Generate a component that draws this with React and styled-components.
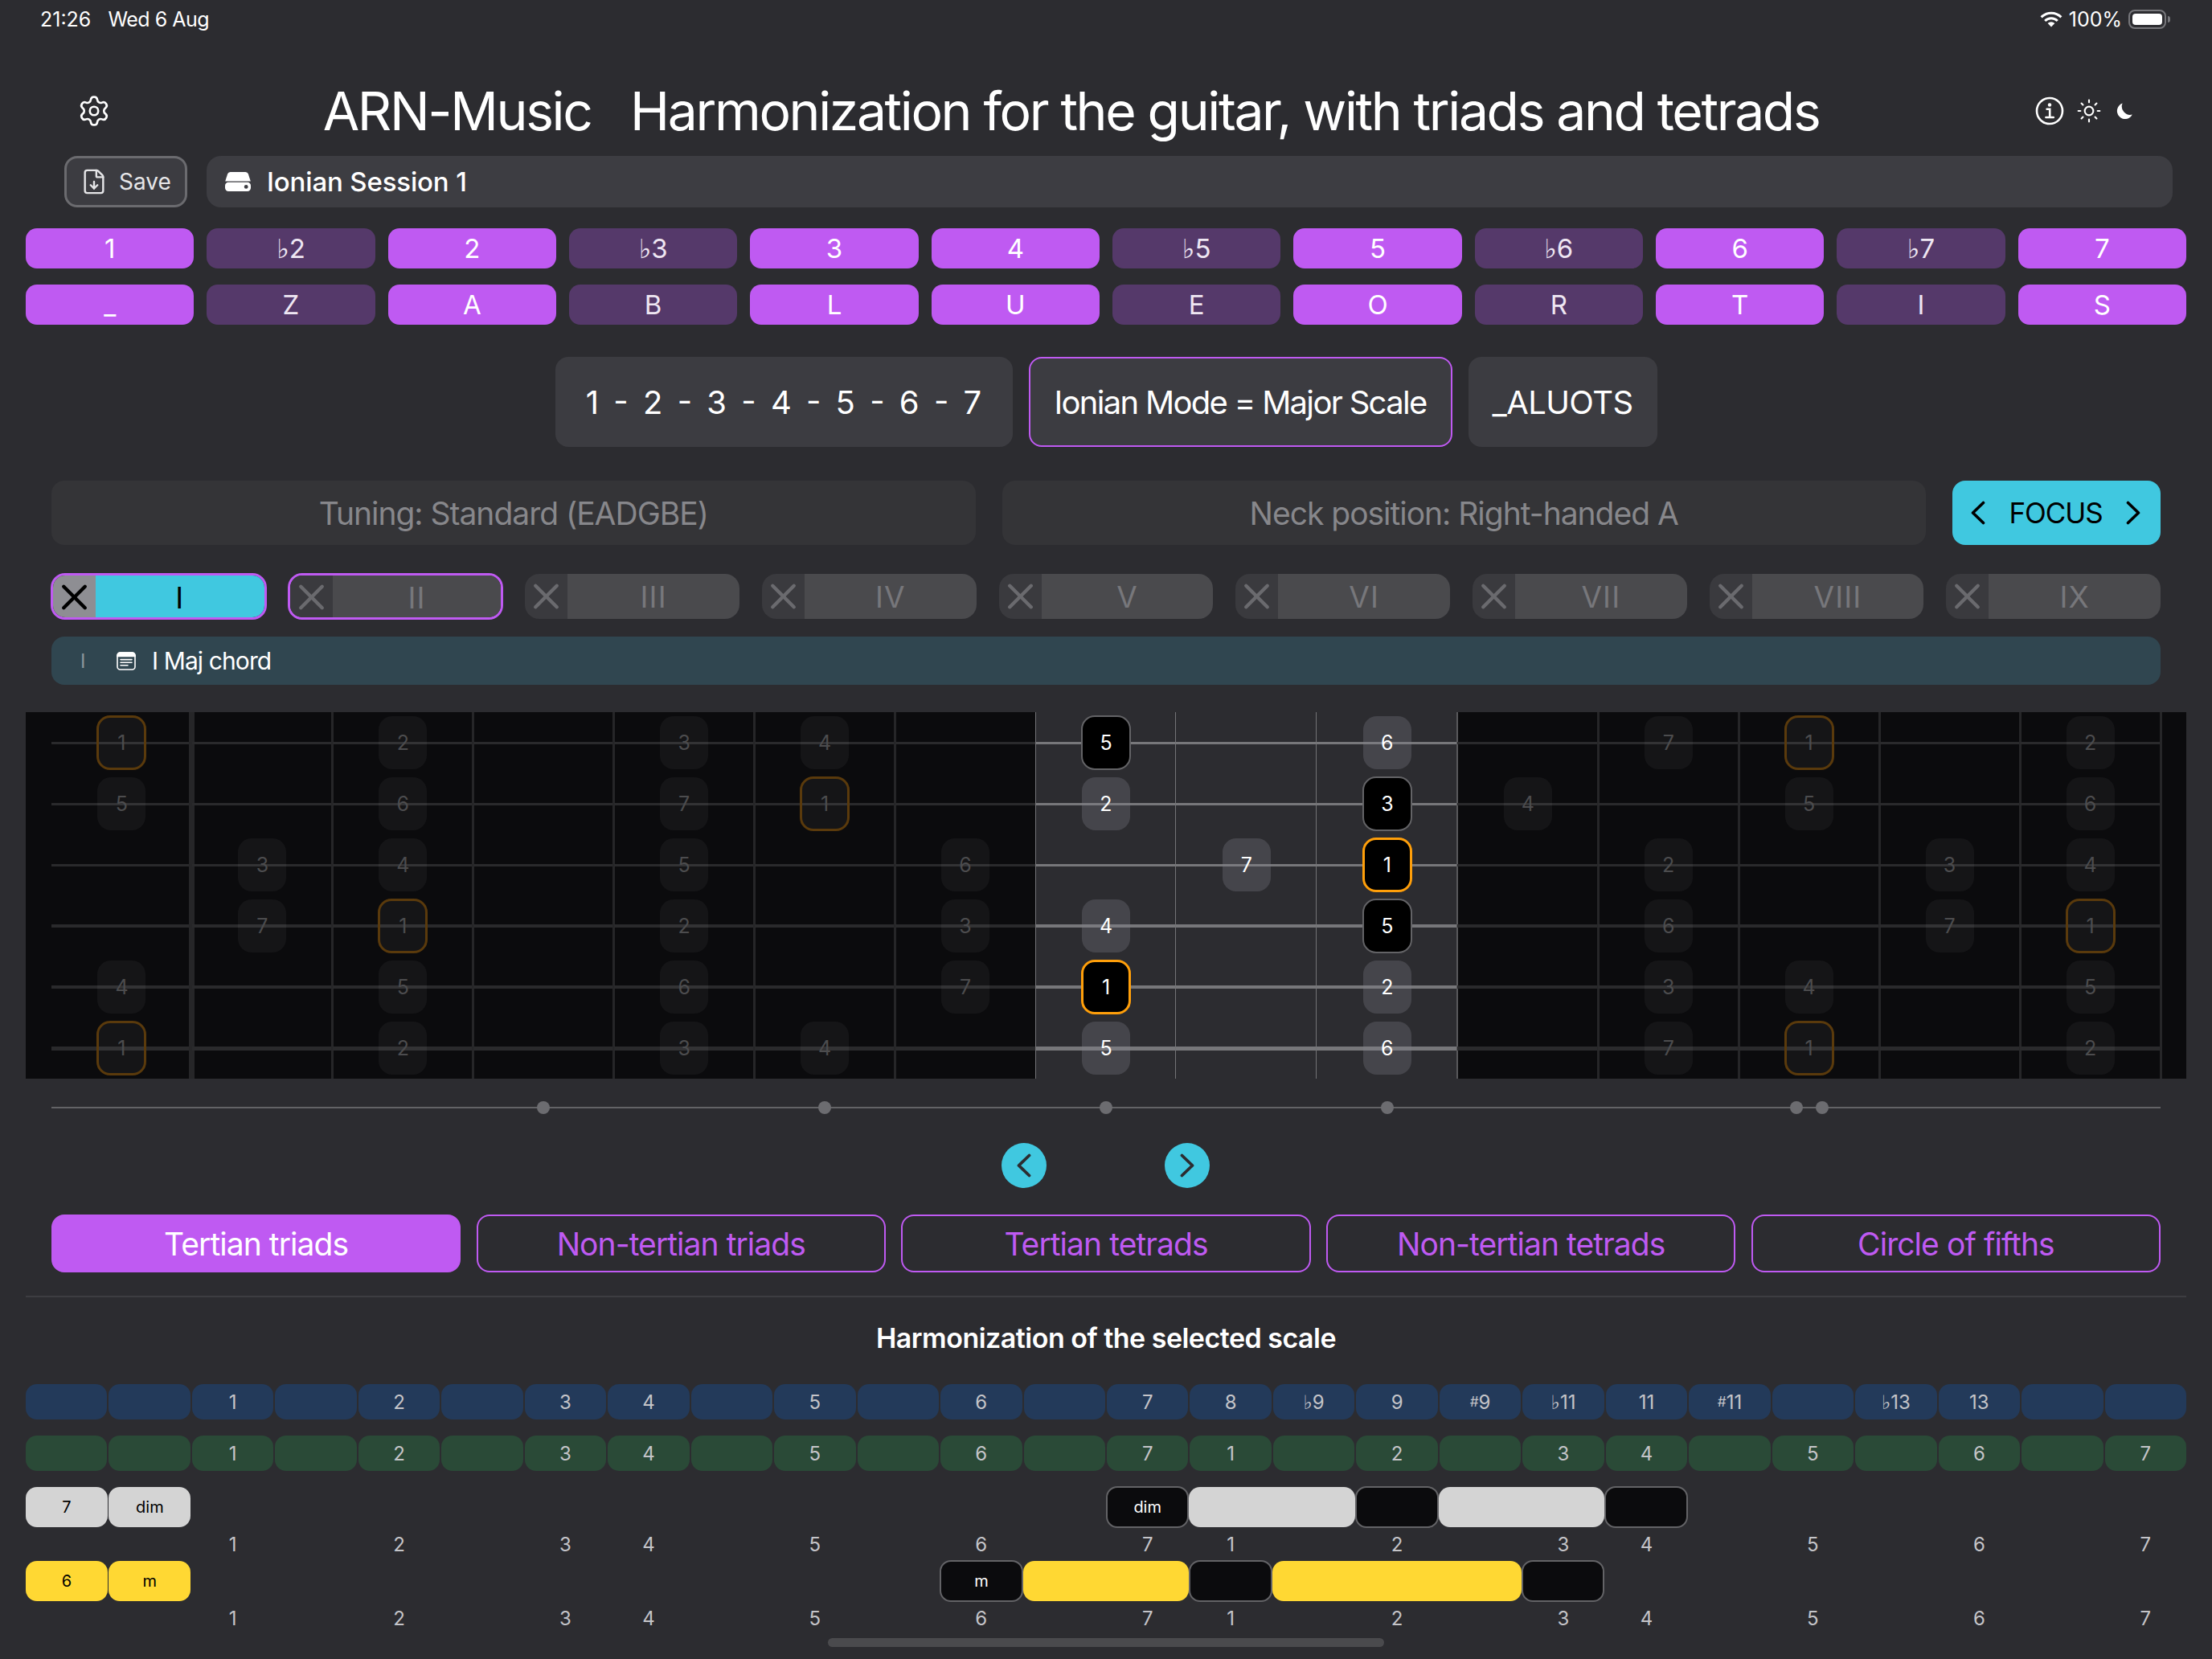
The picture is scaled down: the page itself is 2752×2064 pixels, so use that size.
import styled, { createGlobalStyle } from 'styled-components'
import { FileDown, Settings, Sun, X } from 'lucide-react'

const GlobalStyle = createGlobalStyle`
  * {
    box-sizing: border-box;
  }
  body {
    margin: 0;
    background: #2c2c30;
    font-family: Inter, "Noto Sans", "DejaVu Sans", sans-serif;
    color: #fff;
  }
`

const Page = styled.div`
  position: relative;
  width: 2752px;
  height: 2064px;
  overflow: hidden;
  background: #2c2c30;
`

const StatusBar = styled.div`
  display: flex;
  align-items: center;
  justify-content: space-between;
  height: 48px;
  padding: 0 52px 0 50px;
  font-size: 25px;
`

const StatusGroup = styled.div`
  display: flex;
  align-items: center;
  gap: ${({ $gap }) => $gap}px;
`

const StatusDate = styled.span`
  letter-spacing: -0.02em;
`

const Battery = styled.div`
  position: relative;
  width: 47px;
  height: 24px;
  padding: 3px;
  border: 2px solid #77777b;
  border-radius: 8px;
  margin-right: 5px;

  &::before {
    content: '';
    display: block;
    height: 100%;
    background: #fff;
    border-radius: 4px;
  }
  &::after {
    content: '';
    position: absolute;
    right: -7px;
    top: 6px;
    width: 3px;
    height: 8px;
    background: #77777b;
    border-radius: 0 3px 3px 0;
  }
`

const Header = styled.header`
  display: flex;
  align-items: center;
  height: 60px;
  margin-top: 60px;
  padding: 0 96px;
`

const Title = styled.h1`
  flex: 1;
  margin: 0 5px 0 0;
  text-align: center;
  font-size: 66px;
  font-weight: 400;
  letter-spacing: -0.036em;
  white-space: pre;
`

const HeaderIcons = styled.div`
  display: flex;
  align-items: center;
  gap: 15px;
`

const MoonSlot = styled.div`
  display: flex;
  justify-content: center;
  width: 26px;
`

const SessionRow = styled.div`
  display: flex;
  gap: 24px;
  height: 64px;
  margin-top: 26px;
  padding: 0 49px 0 80px;
`

const SaveButton = styled.button`
  display: flex;
  align-items: center;
  justify-content: center;
  gap: 14px;
  width: 153px;
  padding: 0;
  background: #3c3c41;
  border: 3px solid #6b6b6f;
  border-radius: 16px;
  color: #e6e6e8;
  font: inherit;
  font-size: 28px;
`

const SessionName = styled.div`
  flex: 1;
  display: flex;
  align-items: center;
  gap: 20px;
  padding-left: 23px;
  background: #3d3d42;
  border-radius: 18px;
  font-size: 33px;
  font-weight: 500;
  letter-spacing: -0.005em;
`

const KeyGrid = styled.div`
  display: grid;
  grid-template-columns: repeat(12, 1fr);
  grid-auto-rows: 50px;
  gap: 20px 16px;
  margin-top: 26px;
  padding: 0 32px;
`

const Key = styled.div`
  display: flex;
  align-items: center;
  justify-content: center;
  border-radius: 14px;
  font-size: 33px;
  background: ${({ $on }) => ($on ? '#bf5af2' : '#55396a')};
  color: ${({ $on }) => ($on ? '#fff' : '#eee6f2')};
`

const ScaleInfo = styled.div`
  display: grid;
  grid-template-columns: 569px 527px 235px;
  justify-content: center;
  gap: 20px;
  margin-top: 40px;
`

const InfoBox = styled.div`
  display: flex;
  align-items: center;
  justify-content: center;
  height: 112px;
  background: #3c3c41;
  border-radius: 16px;
  border: ${({ $outlined }) => ($outlined ? '2px solid #bf5af2' : 'none')};
  font-size: 40px;
  letter-spacing: ${({ $track }) => $track}em;
  word-spacing: ${({ $words }) => $words || 0}px;
  white-space: pre;
`

const TuningRow = styled.div`
  display: flex;
  gap: 33px;
  height: 80px;
  margin-top: 42px;
  padding: 0 64px;
`

const TuningBox = styled.div`
  flex: 1;
  display: flex;
  align-items: center;
  justify-content: center;
  background: #343437;
  border-radius: 16px;
  color: #87878b;
  font-size: 39px;
  letter-spacing: -0.026em;
`

const FocusButton = styled.button`
  display: flex;
  align-items: center;
  justify-content: space-between;
  width: 259px;
  padding: 0 25px 0 23px;
  background: #40c8e0;
  border: none;
  border-radius: 16px;
  color: #000;
  font: inherit;
  font-size: 35px;
  letter-spacing: -0.03em;
`

const TabRow = styled.div`
  display: grid;
  grid-template-columns: repeat(9, 1fr);
  gap: 28px;
  height: 56px;
  margin-top: 36px;
  padding: 0 64px;
`

const Tab = styled.div`
  display: grid;
  grid-template-columns: 53px 1fr;
  overflow: hidden;
  border-radius: 18px;
  margin: ${({ $selected }) => ($selected ? '-1px' : '0')};
  border: ${({ $selected }) => ($selected ? '3px solid #bf5af2' : 'none')};
`

const TabClose = styled.div`
  display: flex;
  align-items: center;
  justify-content: center;
  background: ${({ $active }) => ($active ? '#8e8e93' : '#3a3a3e')};
  color: ${({ $active }) => ($active ? '#000' : '#6a6a6e')};
`

const TabLabel = styled.div`
  display: flex;
  align-items: center;
  justify-content: center;
  background: ${({ $active }) => ($active ? '#40c8e0' : '#4a4a4d')};
  color: ${({ $active }) => ($active ? '#000' : '#77777b')};
  font-size: 37px;
  letter-spacing: 0.03em;
`

const ChordBar = styled.div`
  display: flex;
  align-items: center;
  height: 60px;
  margin: 22px 64px 0;
  padding-left: 36px;
  background: #304650;
  border-radius: 16px;
  font-size: 30px;
  white-space: pre;
`

const ChordMark = styled.span`
  width: 45px;
  color: #8b979d;
  font-size: 24px;
`

const ChordName = styled.span`
  margin-left: 20px;
  letter-spacing: -0.03em;
`

const Board = styled.div`
  margin: 34px 32px 0;
  padding: 0 32px;
  background: #0b0b0d;
`

const BoardRow = styled.div`
  display: grid;
  grid-template-columns: repeat(15, 1fr);
  height: 76px;
`

const Cell = styled.div`
  position: relative;
  display: flex;
  align-items: center;
  justify-content: center;
  background: ${({ $lit }) => ($lit ? '#2c2c30' : 'transparent')};

  &::before {
    content: '';
    position: absolute;
    left: 0;
    right: 0;
    top: 50%;
    height: ${({ $gauge }) => $gauge}px;
    margin-top: ${({ $gauge }) => -$gauge / 2}px;
    background: ${({ $lit }) => ($lit ? '#77777a' : '#2a2a2c')};
  }
  &::after {
    content: '';
    position: absolute;
    top: 0;
    bottom: 0;
    right: ${({ $fretWidth }) => -$fretWidth / 2}px;
    width: ${({ $fretWidth }) => $fretWidth}px;
    background: ${({ $fretColor }) => $fretColor};
  }
`

const noteBg = {
  dim: 'rgba(255, 255, 255, 0.045)',
  dimRoot: 'rgba(255, 255, 255, 0.045)',
  plain: 'rgba(130, 130, 140, 0.3)',
  chord: '#000',
  root: '#000',
}

const noteBorder = {
  dim: 'none',
  dimRoot: '3px solid #5a3a0c',
  plain: 'none',
  chord: '2px solid #636366',
  root: '3px solid #ff9f0a',
}

const Note = styled.div`
  position: relative;
  z-index: 1;
  display: flex;
  align-items: center;
  justify-content: center;
  width: ${({ $kind }) => ($kind === 'dim' || $kind === 'plain' ? 60 : 62)}px;
  height: ${({ $kind }) => ($kind === 'dim' || $kind === 'plain' ? 66 : 68)}px;
  border-radius: 17px;
  background: ${({ $kind }) => noteBg[$kind]};
  border: ${({ $kind }) => noteBorder[$kind]};
  color: ${({ $kind }) => ($kind === 'dim' || $kind === 'dimRoot' ? '#4c4c4e' : '#fff')};
  font-size: 25px;
`

const MarkerRow = styled.div`
  position: relative;
  display: grid;
  grid-template-columns: repeat(15, 1fr);
  height: 16px;
  margin: 28px 64px 0;

  &::before {
    content: '';
    position: absolute;
    left: 0;
    right: 0;
    top: 7px;
    height: 2px;
    background: #636366;
  }
`

const MarkerCell = styled.div`
  position: relative;
  display: flex;
  justify-content: center;
  gap: 16px;
`

const MarkerDot = styled.span`
  width: 16px;
  height: 16px;
  border-radius: 50%;
  background: #6c6c70;
`

const NavRow = styled.div`
  display: flex;
  justify-content: center;
  gap: 147px;
  margin-top: 36px;
  padding-right: 1px;
`

const NavButton = styled.button`
  display: flex;
  align-items: center;
  justify-content: center;
  width: 56px;
  height: 56px;
  padding: 0;
  background: #40c8e0;
  border: none;
  border-radius: 50%;
  color: #2c2c30;
`

const PillRow = styled.div`
  display: grid;
  grid-template-columns: repeat(5, 1fr);
  gap: 19.5px;
  height: 72px;
  margin-top: 33px;
  padding: 0 64px;
`

const Pill = styled.button`
  padding: 0;
  border: 2px solid #bf5af2;
  border-radius: 16px;
  background: ${({ $active }) => ($active ? '#bf5af2' : 'transparent')};
  color: ${({ $active }) => ($active ? '#fff' : '#bf5af2')};
  font: inherit;
  font-size: 39px;
  letter-spacing: -0.024em;
`

const Divider = styled.hr`
  height: 2px;
  margin: 29px 32px 0;
  border: none;
  background: #3d3d41;
`

const Heading = styled.h2`
  height: 40px;
  margin: 31px 0 0;
  text-align: center;
  font-size: 34px;
  line-height: 40px;
  font-weight: 600;
  letter-spacing: -0.015em;
`

const Table = styled.div`
  margin-top: 37px;
  padding: 0 32px;
`

const TableRow = styled.div`
  display: grid;
  grid-template-columns: repeat(26, 1fr);
  column-gap: ${({ $gap }) => $gap || 0}px;
  height: ${({ $h }) => $h}px;
  margin-bottom: ${({ $after }) => $after || 0}px;
`

const degreeBg = { blue: '#233a5a', green: '#2a4a37' }

const Degree = styled.div`
  display: flex;
  align-items: center;
  justify-content: center;
  border-radius: 14px;
  background: ${({ $tone }) => degreeBg[$tone] || 'transparent'};
  color: #c4c4c8;
  font-size: 24px;
`

const Sharp = styled.span`
  font-size: 0.72em;
  align-self: flex-start;
  margin-top: 11px;
`

const chordBg = { gray: '#d4d4d4', yellow: '#ffd833', off: '#0b0b0d' }

const ChordCell = styled.div`
  display: flex;
  align-items: center;
  justify-content: center;
  grid-column: ${({ $col, $span }) => `${$col + 1} / span ${$span || 1}`};
  margin: ${({ $tone }) => ($tone === 'off' ? '-1px 0' : '0')};
  margin-right: ${({ $col }) => ($col < 2 ? 1.4 : 0)}px;
  border-radius: 14px;
  background: ${({ $tone }) => chordBg[$tone]};
  border: ${({ $tone }) => ($tone === 'off' ? '2px solid #636366' : 'none')};
  color: ${({ $tone }) => ($tone === 'off' ? '#fff' : '#000')};
  font-size: 20px;
`

const ScrollThumb = styled.div`
  position: absolute;
  left: 1030px;
  bottom: 15px;
  width: 692px;
  height: 11px;
  background: #4a4a4d;
  border-radius: 6px;
`

const WifiIcon = () => (
  <svg width="28" height="20" viewBox="0 0 28 20" fill="none" stroke="#fff" strokeWidth="3">
    <path d="M1.6 7.4a17.6 17.6 0 0 1 24.8 0" />
    <path d="M6.2 12a11 11 0 0 1 15.6 0" />
    <path d="M14 19.6 9.6 15a6.4 6.4 0 0 1 8.8 0Z" fill="#fff" stroke="none" />
  </svg>
)

const InfoIcon = () => (
  <svg width="36" height="36" viewBox="0 0 36 36" fill="none" stroke="#fff" strokeWidth="2.6" strokeLinecap="round">
    <circle cx="18" cy="18" r="16" />
    <circle cx="18" cy="10.5" r="2.2" fill="#fff" stroke="none" />
    <path d="M14.6 15.8h3.6v10" />
    <path d="M13.4 26h9.4" />
  </svg>
)

const MoonIcon = () => (
  <svg width="20" height="21" viewBox="0 0 20 21">
    <path d="M7.6 .6A10 10 0 1 0 19.8 14.6 10.4 10.4 0 0 1 7.6 .6Z" fill="#fff" />
  </svg>
)

const DriveIcon = () => (
  <svg width="32" height="24" viewBox="0 0 32 24">
    <path d="M6.5 0h19q2.6 0 3.4 2.5L31.8 11.6H.2L3.1 2.5Q3.9 0 6.5 0Z" fill="#fff" />
    <rect y="12.8" width="32" height="11.2" rx="4.2" fill="#fff" />
    <circle cx="26.2" cy="18.4" r="2.4" fill="#3d3d42" />
  </svg>
)

const NoteIcon = () => (
  <svg width="24" height="23" viewBox="0 0 24 23" fill="none" stroke="#fff" strokeWidth="1.6">
    <rect x="1" y="1" width="22" height="21" rx="3.5" />
    <path d="M1 5.4V4.5A3.5 3.5 0 0 1 4.5 1h15A3.5 3.5 0 0 1 23 4.5v.9Z" fill="#fff" />
    <path d="M5 9.6h14M5 13.2h14M5 16.8h9" strokeLinecap="round" />
  </svg>
)

const Chevron = ({ right, weight }) => (
  <svg
    width="18"
    height="30"
    viewBox="0 0 18 30"
    fill="none"
    stroke="currentColor"
    strokeWidth={weight}
    strokeLinecap="round"
    strokeLinejoin="round"
  >
    <path d={right ? 'M2.5 2.5 15.5 15 2.5 27.5' : 'M15.5 2.5 2.5 15 15.5 27.5'} />
  </svg>
)

const scaleKeys = [
  ['1', '_', true],
  ['♭2', 'Z', false],
  ['2', 'A', true],
  ['♭3', 'B', false],
  ['3', 'L', true],
  ['4', 'U', true],
  ['♭5', 'E', false],
  ['5', 'O', true],
  ['♭6', 'R', false],
  ['6', 'T', true],
  ['♭7', 'I', false],
  ['7', 'S', true],
]

const positions = ['I', 'II', 'III', 'IV', 'V', 'VI', 'VII', 'VIII', 'IX']

// one object per string, column index -> note label; * marks a chord tone
const strings = [
  { 0: '1', 2: '2', 4: '3', 5: '4', 7: '5*', 9: '6', 11: '7', 12: '1', 14: '2' },
  { 0: '5', 2: '6', 4: '7', 5: '1', 7: '2', 9: '3*', 10: '4', 12: '5', 14: '6' },
  { 1: '3', 2: '4', 4: '5', 6: '6', 8: '7', 9: '1', 11: '2', 13: '3', 14: '4' },
  { 1: '7', 2: '1', 4: '2', 6: '3', 7: '4', 9: '5*', 11: '6', 13: '7', 14: '1' },
  { 0: '4', 2: '5', 4: '6', 6: '7', 7: '1', 9: '2', 11: '3', 12: '4', 14: '5' },
  { 0: '1', 2: '2', 4: '3', 5: '4', 7: '5', 9: '6', 11: '7', 12: '1', 14: '2' },
]
const gauges = [3, 3, 3, 4, 4, 5]

const noteKind = (label, lit) => {
  if (label === '1') return lit ? 'root' : 'dimRoot'
  if (label.endsWith('*')) return 'chord'
  return lit ? 'plain' : 'dim'
}

const isLit = col => col >= 7 && col <= 9

const fretWidth = col => {
  if (col === 0) return 7
  return col === 6 || col === 9 ? 2 : 3
}

const fretColor = col => {
  if (col === 9) return '#58585b'
  return col >= 6 && col < 9 ? '#737376' : '#262628'
}

const markers = { 3: 1, 5: 1, 7: 1, 9: 1, 12: 2 }

const intervals = {
  2: '1',
  4: '2',
  6: '3',
  7: '4',
  9: '5',
  11: '6',
  13: '7',
  14: '8',
  15: '♭9',
  16: '9',
  17: <><Sharp>#</Sharp>9</>,
  18: '♭11',
  19: '11',
  20: <><Sharp>#</Sharp>11</>,
  22: '♭13',
  23: '13',
}
const degrees = { 2: '1', 4: '2', 6: '3', 7: '4', 9: '5', 11: '6', 13: '7', 14: '1', 16: '2', 18: '3', 19: '4', 21: '5', 23: '6', 25: '7' }

const range26 = Array.from({ length: 26 }, (_, i) => i)

const chords = [
  {
    name: 'dim',
    cells: [
      { col: 0, tone: 'gray', text: '7' },
      { col: 1, tone: 'gray', text: 'dim' },
      { col: 13, tone: 'off', text: 'dim' },
      { col: 14, span: 2, tone: 'gray' },
      { col: 16, tone: 'off' },
      { col: 17, span: 2, tone: 'gray' },
      { col: 19, tone: 'off' },
    ],
  },
  {
    name: 'minor',
    cells: [
      { col: 0, tone: 'yellow', text: '6' },
      { col: 1, tone: 'yellow', text: 'm' },
      { col: 11, tone: 'off', text: 'm' },
      { col: 12, span: 2, tone: 'yellow' },
      { col: 14, tone: 'off' },
      { col: 15, span: 3, tone: 'yellow' },
      { col: 18, tone: 'off' },
    ],
  },
]

export default function App() {
  return (
    <Page>
      <GlobalStyle />
      <StatusBar>
        <StatusGroup $gap={21}>
          <span>21:26</span>
          <StatusDate>Wed 6 Aug</StatusDate>
        </StatusGroup>
        <StatusGroup $gap={8}>
          <WifiIcon />
          <span>100%</span>
          <Battery />
        </StatusGroup>
      </StatusBar>

      <Header>
        <Settings size={42} strokeWidth={1.5} />
        <Title>ARN-Music   Harmonization for the guitar, with triads and tetrads</Title>
        <HeaderIcons>
          <InfoIcon />
          <Sun size={32} strokeWidth={1.6} />
          <MoonSlot><MoonIcon /></MoonSlot>
        </HeaderIcons>
      </Header>

      <SessionRow>
        <SaveButton>
          <FileDown size={34} strokeWidth={1.7} />
          Save
        </SaveButton>
        <SessionName>
          <DriveIcon />
          Ionian Session 1
        </SessionName>
      </SessionRow>

      <KeyGrid>
        {scaleKeys.map(([degree, , on]) => (
          <Key key={degree} $on={on}>{degree}</Key>
        ))}
        {scaleKeys.map(([, letter, on]) => (
          <Key key={letter} $on={on}>{letter}</Key>
        ))}
      </KeyGrid>

      <ScaleInfo>
        <InfoBox $track={0} $words={7}>1 - 2 - 3 - 4 - 5 - 6 - 7</InfoBox>
        <InfoBox $outlined $track={-0.042}>Ionian Mode = Major Scale</InfoBox>
        <InfoBox $track={-0.015}>_ALUOTS</InfoBox>
      </ScaleInfo>

      <TuningRow>
        <TuningBox>Tuning: Standard (EADGBE)</TuningBox>
        <TuningBox>Neck position: Right-handed A</TuningBox>
        <FocusButton>
          <Chevron weight={3.6} />
          FOCUS
          <Chevron right weight={3.6} />
        </FocusButton>
      </TuningRow>

      <TabRow>
        {positions.map((name, i) => (
          <Tab key={name} $selected={i < 2}>
            <TabClose $active={i === 0}>
              <X size={54} strokeWidth={2} />
            </TabClose>
            <TabLabel $active={i === 0}>{name}</TabLabel>
          </Tab>
        ))}
      </TabRow>

      <ChordBar>
        <ChordMark>I</ChordMark>
        <NoteIcon />
        <ChordName>I Maj chord</ChordName>
      </ChordBar>

      <Board>
        {strings.map((notes, s) => (
          <BoardRow key={s}>
            {Array.from({ length: 15 }, (_, col) => (
              <Cell
                key={col}
                $lit={isLit(col)}
                $fretWidth={fretWidth(col)}
                $fretColor={fretColor(col)}
                $gauge={gauges[s]}
              >
                {notes[col] && (
                  <Note $kind={noteKind(notes[col], isLit(col))}>{notes[col].replace('*', '')}</Note>
                )}
              </Cell>
            ))}
          </BoardRow>
        ))}
      </Board>

      <MarkerRow>
        {Array.from({ length: 15 }, (_, col) => (
          <MarkerCell key={col}>
            {Array.from({ length: markers[col] || 0 }, (_, i) => (
              <MarkerDot key={i} />
            ))}
          </MarkerCell>
        ))}
      </MarkerRow>

      <NavRow>
        <NavButton><Chevron weight={3.8} /></NavButton>
        <NavButton><Chevron right weight={3.8} /></NavButton>
      </NavRow>

      <PillRow>
        <Pill $active>Tertian triads</Pill>
        <Pill>Non-tertian triads</Pill>
        <Pill>Tertian tetrads</Pill>
        <Pill>Non-tertian tetrads</Pill>
        <Pill>Circle of fifths</Pill>
      </PillRow>

      <Divider />
      <Heading>Harmonization of the selected scale</Heading>

      <Table>
        <TableRow $h={44} $after={20} $gap={2}>
          {range26.map(i => (
            <Degree key={i} $tone="blue">{intervals[i]}</Degree>
          ))}
        </TableRow>
        <TableRow $h={44} $after={20} $gap={2}>
          {range26.map(i => (
            <Degree key={i} $tone="green">{degrees[i]}</Degree>
          ))}
        </TableRow>
        {chords.map(chord => (
          <div key={chord.name}>
            <TableRow $h={50}>
              {chord.cells.map(cell => (
                <ChordCell key={cell.col} $col={cell.col} $span={cell.span} $tone={cell.tone}>
                  {cell.text}
                </ChordCell>
              ))}
            </TableRow>
            <TableRow $h={42} $gap={2}>
              {range26.map(i => (
                <Degree key={i}>{degrees[i]}</Degree>
              ))}
            </TableRow>
          </div>
        ))}
      </Table>

      <ScrollThumb />
    </Page>
  )
}
